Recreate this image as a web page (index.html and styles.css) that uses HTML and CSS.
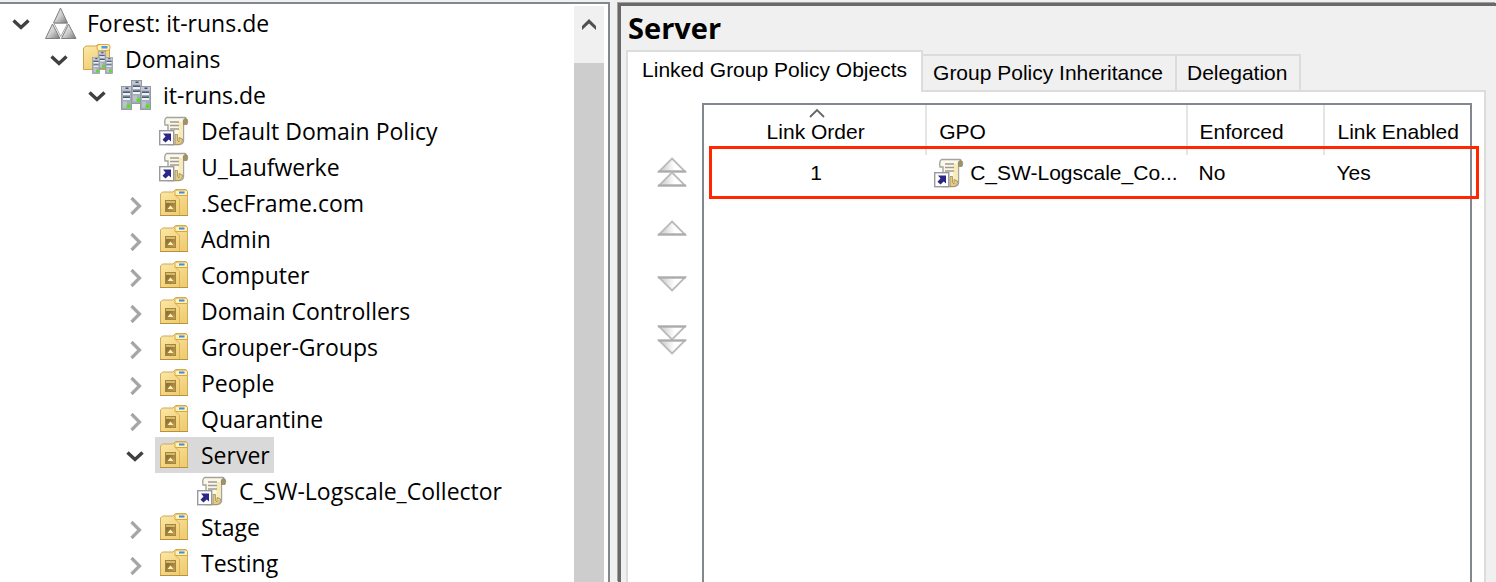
FILE: index.html
```html
<!DOCTYPE html>
<html lang="en">
<head>
  <meta charset="UTF-8">
  <meta name="viewport" content="width=device-width, initial-scale=1.0">
  <title>Group Policy Management</title>
  <link rel="stylesheet" href="styles.css">
</head>
<body>
  <!-- icon definitions -->
  <svg class="defs" aria-hidden="true">
    <defs>
      <linearGradient id="silver" x1="0" y1="0" x2="1" y2="1">
        <stop offset="0.2" stop-color="#e2e2e2"/>
        <stop offset="0.5" stop-color="#cfcfcf"/>
        <stop offset="1" stop-color="#777"/>
      </linearGradient>
      <linearGradient id="pale" x1="0" y1="0" x2="1" y2="0">
        <stop offset="0.2" stop-color="#d8d8d8"/>
        <stop offset="0.6" stop-color="#ffffff"/>
      </linearGradient>
      <linearGradient id="gold" x1="0" y1="0" x2="0.6" y2="1">
        <stop offset="0" stop-color="#fce9a8"/>
        <stop offset="1" stop-color="#efcd73"/>
      </linearGradient>
      <linearGradient id="plate" x1="0" y1="0" x2="1" y2="1">
        <stop offset="0.3" stop-color="#8f7334"/>
        <stop offset="1" stop-color="#c9a552"/>
      </linearGradient>
    </defs>
    <symbol id="open" viewBox="0 0 32 36">
      <path d="M8.500 15.500 L16 22.500 L23.500 15.500" fill="none" stroke="#404040" stroke-width="3.400"/>
    </symbol>
    <symbol id="closed" viewBox="0 0 32 36">
      <path d="M12.500 13 L20.500 21 L12.500 29" fill="none" stroke="#a6a6a6" stroke-width="3.200"/>
    </symbol>
    <symbol id="forest" viewBox="0 0 32 32">
      <g fill="url(#silver)" stroke="#808080" stroke-width="1" stroke-linejoin="round">
        <path d="M15.500 1 L22.500 16 L8.500 16 Z"/>
        <path d="M7.500 17 L15 31.500 L0.500 31.500 Z"/>
        <path d="M23.500 17 L31 31.500 L16.500 31.500 Z"/>
      </g>
      <path d="M9 16.500 L22.500 16.500 L15.800 29.500 Z" fill="#fff" stroke="#a5a5a5"/>
    </symbol>
    <symbol id="tower" viewBox="0 0 11 24">
      <rect x="0.500" y="0.500" width="10" height="23" fill="#a5adb8" stroke="#959aa2"/>
      <rect x="1" y="1" width="9" height="3.500" fill="#c3c8cf"/>
      <rect x="4.500" y="1.500" width="3" height="1.500" fill="#3b5375"/>
      <rect x="2" y="5.500" width="7" height="1.500" fill="#4a5b73"/>
      <rect x="2" y="7" width="7" height="2" fill="#eef2f6"/>
      <rect x="2" y="10.500" width="7" height="1.500" fill="#4a5b73"/>
      <rect x="2" y="12" width="7" height="2" fill="#eef2f6"/>
      <rect x="2" y="15.500" width="4" height="6" fill="#bac2cc"/>
      <rect x="5.500" y="18.500" width="4" height="3.500" rx="1" fill="#59e01c"/>
    </symbol>
    <symbol id="domain" viewBox="0 0 32 32">
      <use href="#tower" x="10" y="1" width="11" height="24"/>
      <use href="#tower" x="0" y="7" width="11" height="24"/>
      <use href="#tower" x="19" y="7" width="11" height="24"/>
    </symbol>
    <symbol id="domains" viewBox="0 0 32 32">
      <path d="M0.500 26.500 V5 L3 3 H13 L15 1.500 H25 L26.500 3 V26.500 Z" fill="url(#gold)" stroke="#cfa544"/>
      <rect x="14" y="1.500" width="13" height="6" rx="2.500" fill="#fff0b8" stroke="#d9a83e"/>
      <rect x="18.500" y="3" width="6" height="2.500" fill="#4b9bea"/>
      <use href="#tower" x="14" y="8" width="10" height="18"/>
      <use href="#tower" x="8" y="14" width="10" height="17"/>
      <use href="#tower" x="21" y="14" width="10" height="17"/>
    </symbol>
    <symbol id="ou" viewBox="0 0 32 32">
      <path d="M1.500 28.500 V7 L3.500 5 H14 L16.500 2.500 H27 L28.500 4.500 V28.500 Z" fill="url(#gold)" stroke="#cfa95a"/>
      <path d="M16 8.500 V4.500 L17.500 3 H27 L28.500 4.500 V8.500 Z" fill="#fff1bd" stroke="#d5a83f"/>
      <rect x="20" y="4.500" width="5.500" height="2" fill="#3f8fe0"/>
      <path d="M16 8.500 L20.500 12 V28" fill="none" stroke="#dcb453"/>
      <rect x="6.500" y="13.500" width="10" height="11" fill="url(#plate)" stroke="#a5843b"/>
      <rect x="7" y="14" width="9" height="2" fill="#d8b969"/>
      <path d="M8.500 22 L11.500 18.500 L14.500 22 Z" fill="#fdf0bd"/>
      <path d="M1 28.500 H29" stroke="#b8913f"/>
    </symbol>
    <symbol id="gpo" viewBox="0 0 32 32">
      <path d="M7.500 2.500 H26 Q28 2.500 24.500 6 V26 Q24 29.500 20 29.500 H9 V10 H6 Q5 4 7.500 2.500 Z" fill="#fbf8e8" stroke="#a3a3a1" stroke-width="1.400"/>
      <path d="M19.500 7 H23.800 V25 L19.500 28 Z" fill="#f8ebb6"/>
      <path d="M24.500 9.500 V5 Q25.500 2.500 28 4 Q29.500 6 28 9.500 Z" fill="#a8925c" stroke="#8f8a7c" stroke-width="0.800"/>
      <path d="M11 7 H20 M11 10.500 H20 M11 14 H20" stroke="#a09a94" stroke-width="1.300"/>
      <path d="M16 19.500 V29.500 H20 Q23.500 29 23.500 24 L20 22.500 V27 L18.500 25.500 V19.500 Z" fill="#e3cd83" stroke="#a08c56" stroke-width="0.800"/>
      <rect x="0.700" y="15.700" width="14" height="14" fill="#fff" stroke="#9a9a9e" stroke-width="1.400"/>
      <path d="M4 18.500 H12 V26.500 L9.700 24.500 L6.500 27.500 L3.500 24.700 L6.500 21.500 Z" fill="#2b2788"/>
    </symbol>
    <symbol id="up" viewBox="0 0 30 16">
      <path d="M15 1.500 L28 14.500 H2 Z" fill="url(#pale)" stroke="#bbb" stroke-width="1.800"/>
      <path d="M1 14.500 H29" stroke="#ababab" stroke-width="2"/>
    </symbol>
    <symbol id="down" viewBox="0 0 30 16">
      <path d="M15 14.500 L28 1.500 H2 Z" fill="url(#pale)" stroke="#bbb" stroke-width="1.800"/>
      <path d="M1 1.500 H29" stroke="#ababab" stroke-width="2"/>
    </symbol>
  </svg>

  <main class="console">
    <nav class="tree-pane" aria-label="Console tree">
      <ul class="tree">
        <li>
          <div class="row">
            <button class="toggle" aria-label="Collapse"><svg><use href="#open"/></svg></button>
            <span class="node"><svg class="icon"><use href="#forest"/></svg>Forest: it-runs.de</span>
          </div>
          <ul>
            <li>
              <div class="row">
                <button class="toggle" aria-label="Collapse"><svg><use href="#open"/></svg></button>
                <span class="node"><svg class="icon"><use href="#domains"/></svg>Domains</span>
              </div>
              <ul>
                <li>
                  <div class="row">
                    <button class="toggle" aria-label="Collapse"><svg><use href="#open"/></svg></button>
                    <span class="node"><svg class="icon"><use href="#domain"/></svg>it-runs.de</span>
                  </div>
                  <ul>
                    <li><div class="row leaf"><span class="node"><svg class="icon"><use href="#gpo"/></svg>Default Domain Policy</span></div></li>
                    <li><div class="row leaf"><span class="node"><svg class="icon"><use href="#gpo"/></svg>U_Laufwerke</span></div></li>
                    <li><div class="row"><button class="toggle" aria-label="Expand"><svg><use href="#closed"/></svg></button><span class="node"><svg class="icon"><use href="#ou"/></svg>.SecFrame.com</span></div></li>
                    <li><div class="row"><button class="toggle" aria-label="Expand"><svg><use href="#closed"/></svg></button><span class="node"><svg class="icon"><use href="#ou"/></svg>Admin</span></div></li>
                    <li><div class="row"><button class="toggle" aria-label="Expand"><svg><use href="#closed"/></svg></button><span class="node"><svg class="icon"><use href="#ou"/></svg>Computer</span></div></li>
                    <li><div class="row"><button class="toggle" aria-label="Expand"><svg><use href="#closed"/></svg></button><span class="node"><svg class="icon"><use href="#ou"/></svg>Domain Controllers</span></div></li>
                    <li><div class="row"><button class="toggle" aria-label="Expand"><svg><use href="#closed"/></svg></button><span class="node"><svg class="icon"><use href="#ou"/></svg>Grouper-Groups</span></div></li>
                    <li><div class="row"><button class="toggle" aria-label="Expand"><svg><use href="#closed"/></svg></button><span class="node"><svg class="icon"><use href="#ou"/></svg>People</span></div></li>
                    <li><div class="row"><button class="toggle" aria-label="Expand"><svg><use href="#closed"/></svg></button><span class="node"><svg class="icon"><use href="#ou"/></svg>Quarantine</span></div></li>
                    <li>
                      <div class="row"><button class="toggle" aria-label="Collapse"><svg><use href="#open"/></svg></button><span class="node selected"><svg class="icon"><use href="#ou"/></svg>Server</span></div>
                      <ul>
                        <li><div class="row leaf"><span class="node"><svg class="icon"><use href="#gpo"/></svg>C_SW-Logscale_Collector</span></div></li>
                      </ul>
                    </li>
                    <li><div class="row"><button class="toggle" aria-label="Expand"><svg><use href="#closed"/></svg></button><span class="node"><svg class="icon"><use href="#ou"/></svg>Stage</span></div></li>
                    <li><div class="row"><button class="toggle" aria-label="Expand"><svg><use href="#closed"/></svg></button><span class="node"><svg class="icon"><use href="#ou"/></svg>Testing</span></div></li>
                  </ul>
                </li>
              </ul>
            </li>
          </ul>
        </li>
      </ul>
      <div class="scrollbar">
        <button class="scroll-up" aria-label="Scroll up">
          <svg width="18" height="14" viewBox="0 0 18 14"><path d="M2 13 V9 L9 2 L16 9 V13 L9 6.500 Z" fill="#505050"/></svg>
        </button>
        <div class="thumb"></div>
      </div>
    </nav>

    <section class="details">
      <h1 class="title">Server</h1>
      <div class="tabs" role="tablist">
        <button class="tab active" role="tab" aria-selected="true">Linked Group Policy Objects</button>
        <button class="tab" role="tab" aria-selected="false">Group Policy Inheritance</button>
        <button class="tab" role="tab" aria-selected="false">Delegation</button>
      </div>
      <div class="panel" role="tabpanel">
        <div class="order">
          <button class="move" aria-label="Move to top"><svg class="arrow"><use href="#up"/></svg><svg class="arrow"><use href="#up"/></svg></button>
          <button class="move" aria-label="Move up"><svg class="arrow"><use href="#up"/></svg></button>
          <button class="move" aria-label="Move down"><svg class="arrow"><use href="#down"/></svg></button>
          <button class="move" aria-label="Move to bottom"><svg class="arrow"><use href="#down"/></svg><svg class="arrow"><use href="#down"/></svg></button>
        </div>
        <div class="list">
          <table class="links">
            <colgroup>
              <col class="col-order">
              <col class="col-gpo">
              <col class="col-enforced">
              <col>
            </colgroup>
            <thead>
              <tr>
                <th class="center">Link Order<svg class="sort" viewBox="0 0 16 10"><path d="M1 9 L8 2 L15 9" fill="none" stroke="#666" stroke-width="1.800"/></svg></th>
                <th>GPO</th>
                <th>Enforced</th>
                <th>Link Enabled</th>
              </tr>
            </thead>
            <tbody>
              <tr>
                <td class="center">1</td>
                <td><span class="gpo-name"><svg class="icon"><use href="#gpo"/></svg>C_SW-Logscale_Co...</span></td>
                <td>No</td>
                <td>Yes</td>
              </tr>
            </tbody>
          </table>
          <div class="highlight"></div>
        </div>
      </div>
    </section>
  </main>
</body>
</html>
```
FILE: styles.css
```css
* {
  box-sizing: border-box;
}

body {
  margin: 0;
  height: 100vh;
  overflow: hidden;
  background: #f0f0f0;
  color: #000;
  font-family: "Liberation Sans", Arial, sans-serif;
  font-size: 21px;
}

button {
  margin: 0;
  padding: 0;
  border: none;
  background: none;
  font: inherit;
  color: inherit;
}

svg {
  display: block;
  flex: none;
}

.defs {
  position: absolute;
  width: 0;
  height: 0;
}

.console {
  display: grid;
  grid-template-columns: 41fr 59fr;
  gap: 8px;
  height: 100vh;
  padding-top: 2px;
}

/* tree */
.tree-pane {
  display: flex;
  overflow: hidden;
  background: #fff;
  border-top: 2px solid #828790;
  border-right: 2px solid #828790;
}

.tree,
.tree ul {
  margin: 0;
  padding: 0;
  list-style: none;
}

.tree {
  flex: 1;
  padding-top: 1px;
  font-family: "Open Sans", "Noto Sans", sans-serif;
  font-size: 23px;
}

.tree ul {
  padding-left: 38px;
}

.row {
  display: flex;
  height: 36px;
  padding-left: 5px;
}

.leaf {
  padding-left: 37px;
}

.toggle,
.toggle svg {
  width: 32px;
  height: 36px;
}

.node {
  display: flex;
  align-items: center;
  gap: 10px;
  margin-left: 4px;
  padding: 0 4px;
  line-height: 34px;
  white-space: nowrap;
}

.selected {
  background: #d9d9d9;
}

.icon {
  width: 32px;
  height: 32px;
}

.scrollbar {
  display: flex;
  flex-direction: column;
  width: 30px;
  margin: 2px 4px 0 0;
  background: #f0f0f0;
}

.scroll-up {
  display: flex;
  align-items: center;
  justify-content: center;
  height: 36px;
  margin-bottom: 21px;
}

.thumb {
  flex: 1;
  background: #cdcdcd;
}

/* details */
.details {
  display: flex;
  flex-direction: column;
  overflow: hidden;
  margin-top: 1px;
  padding: 0 10px 0 5px;
  border-top: 3px solid #696969;
  border-left: 3px solid #696969;
  box-shadow: -1px -1px 0 #a0a0a0;
}

.title {
  margin: 0 0 0 2px;
  font-family: "Open Sans", "Noto Sans", sans-serif;
  font-size: 29px;
  line-height: 44px;
}

.tabs {
  display: flex;
  align-items: flex-end;
  height: 40px;
}

.tab {
  height: 36px;
  padding: 0 12px 0 10px;
  border: 2px solid #dcdcdc;
  border-left: none;
  border-bottom: none;
}

.active {
  position: relative;
  height: 42px;
  margin-bottom: -2px;
  padding: 0 14px 4px;
  border-left: 2px solid #dcdcdc;
  background: #fff;
}

.panel {
  display: flex;
  flex: 1;
  padding: 11px 12px 0 0;
  background: #fff;
  border: 2px solid #dcdcdc;
  border-bottom: none;
}

.order {
  width: 74px;
  padding: 41px 0 0 28px;
}

.move {
  display: flex;
  flex-direction: column;
  align-items: center;
  justify-content: center;
  width: 32px;
  height: 56px;
}

.arrow {
  width: 30px;
  height: 16px;
}

.arrow + .arrow {
  margin-top: -2px;
}

.list {
  position: relative;
  flex: 1;
  border: 2px solid #828790;
  border-bottom: none;
}

.links {
  width: 100%;
  table-layout: fixed;
  border-collapse: collapse;
}

.col-order {
  width: 29%;
}

.col-gpo {
  width: 34%;
}

.col-enforced {
  width: 18%;
}

.links th,
.links td {
  padding: 0 0 0 12px;
  text-align: left;
  font-weight: normal;
  white-space: nowrap;
}

.links th {
  position: relative;
  height: 50px;
  padding-top: 4px;
  border-right: 2px solid #e5e5e5;
}

.links th:last-child {
  border-right: none;
}

.links td {
  height: 36px;
}

.links .center {
  padding-left: 2px;
  text-align: center;
}

.sort {
  position: absolute;
  top: 3px;
  left: 50%;
  width: 16px;
  height: 10px;
  margin-left: -6px;
}

.gpo-name {
  display: flex;
  align-items: center;
  gap: 4px;
  margin-left: -4px;
}

/* red frame around the linked policy */
.highlight {
  position: absolute;
  top: 41px;
  left: 5px;
  right: -9px;
  height: 53px;
  border: 3px solid #ff2600;
}
```
